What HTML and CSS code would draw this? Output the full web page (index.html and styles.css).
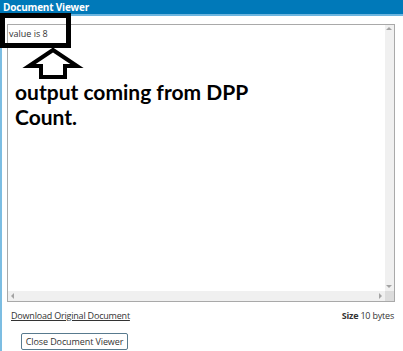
FILE: index.html
```html
<!DOCTYPE html>
<html lang="en">
  <head>
    <meta charset="utf-8" />
    <title>Document Viewer</title>
    <link rel="stylesheet" href="styles.css">
  </head>
  <body>
    <div class="dialog">
      <div class="title-bar">Document Viewer</div>
      <div class="dialog-body">
        <div class="viewer">
          <div class="viewer-page">value is 8</div>
          <div class="scroll-v">
            <span class="arrow-up"></span>
            <span class="arrow-down"></span>
          </div>
          <div class="scroll-h">
            <span class="arrow-left"></span>
            <span class="arrow-right"></span>
          </div>
          <div class="scroll-corner"></div>
        </div>

        <div class="doc-info">
          <a class="download-link" href="#">Download Original Document</a>
          <span class="doc-size"><b>Size</b> 10 bytes</span>
        </div>

        <div class="actions">
          <button class="close-btn">Close Document Viewer</button>
        </div>
      </div>
    </div>

    <!-- annotation drawn over the screenshot -->
    <svg class="markup" width="90" height="82" viewBox="0 0 90 82">
      <rect x="2.5" y="15.5" width="66" height="30" fill="none" stroke="#000" stroke-width="5" />
      <polygon points="53,50 77,66 65,66 65,77 41,77 41,66 29,66" fill="#fff" stroke="#000" stroke-width="4" stroke-linejoin="miter" />
    </svg>
    <div class="markup-note">output coming from DPP<br>Count.</div>
  </body>
</html>
```

FILE: styles.css
```css
body {
  margin: 0;
  font-family: "Open Sans", "Noto Sans", sans-serif;
  color: #333;
  background: #fff;
}

.dialog {
  border-left: 2px solid #7cbde2;
  height: 351px;
  box-sizing: border-box;
}

.title-bar {
  height: 14px;
  line-height: 14px;
  background-color: #0079b9;
  border-bottom: 2px solid #6db5df;
  color: #fff;
  font-size: 10px;
  font-weight: bold;
  letter-spacing: -0.2px;
  padding-left: 3px;
  margin-left: -2px;
}

.dialog-body {
  padding: 8px 6px 0 5px;
}

.viewer {
  display: grid;
  grid-template-columns: 1fr 9px;
  grid-template-rows: 1fr 10px;
  width: 388px;
  height: 278px;
  box-sizing: border-box;
  border: 1px solid #a9a9a9;
}

.viewer-page {
  font-size: 9px;
  padding: 2px 0 0 1px;
  color: #333;
}

.scroll-v,
.scroll-h {
  background: #f0f0f0;
  position: relative;
}

.scroll-corner {
  background: #dcdcdc;
}

.arrow-up,
.arrow-down,
.arrow-left,
.arrow-right {
  position: absolute;
  width: 0;
  height: 0;
  border: 3px solid transparent;
}

.arrow-up {
  top: 2px;
  left: 1px;
  border-bottom-color: #a3a3a3;
  border-top-width: 0;
}

.arrow-down {
  bottom: 3px;
  left: 1px;
  border-top-color: #a3a3a3;
  border-bottom-width: 0;
}

.arrow-left {
  left: 3px;
  top: 2px;
  border-right-color: #a3a3a3;
  border-left-width: 0;
}

.arrow-right {
  right: 3px;
  top: 2px;
  border-left-color: #a3a3a3;
  border-right-width: 0;
}

.doc-info {
  display: flex;
  justify-content: space-between;
  align-items: center;
  width: 388px;
  margin-top: 7px;
  font-size: 9px;
  line-height: 14px;
  letter-spacing: -0.2px;
}

.download-link {
  color: #333;
  margin-left: 4px;
  text-decoration: underline;
}

.doc-size {
  margin-right: 1px;
}

.actions {
  display: flex;
  padding: 10px 0 0 14px;
}

.close-btn {
  font-family: inherit;
  font-size: 9px;
  letter-spacing: -0.1px;
  color: #333;
  background: #fff;
  border: 1px solid #587a8e;
  border-radius: 2px;
  width: 107px;
  height: 17px;
  padding: 0;
}

.markup {
  position: absolute;
  left: 0;
  top: 0;
}

.markup-note {
  position: absolute;
  left: 15px;
  top: 79px;
  font-family: Lato, sans-serif;
  font-weight: bold;
  font-size: 21px;
  line-height: 25px;
  color: #000;
}
```
